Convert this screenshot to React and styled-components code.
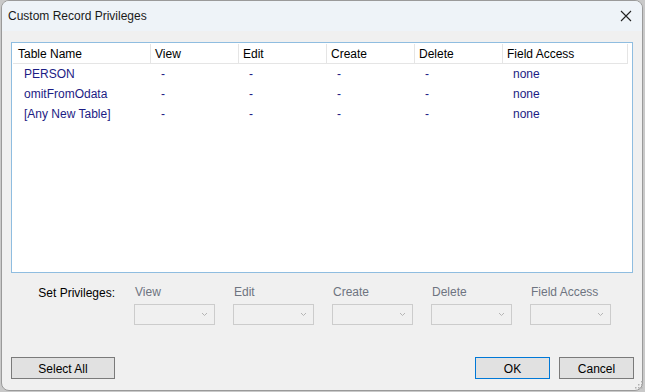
import React from 'react'
import styled, { createGlobalStyle } from 'styled-components'

const GlobalStyle = createGlobalStyle`
  html, body {
    margin: 0;
    padding: 0;
    background: #c9c9c9;
    font-family: "Liberation Sans", Arial, sans-serif;
    font-size: 12px;
  }
`

const Frame = styled.div`
  position: relative;
`

const Window = styled.div`
  margin-left: 1px;
  width: 642px;
  height: 391px;
  box-sizing: border-box;
  border: 1px solid #9a9a9a;
  border-radius: 8px;
  background: #f0f0f0;
  overflow: hidden;
  display: flex;
  flex-direction: column;
`

const TitleBar = styled.div`
  height: 30px;
  flex: 0 0 auto;
  background: #eef3f8;
  display: flex;
  align-items: center;
  justify-content: space-between;
  padding: 0 10px 0 6px;
  color: #1a1a1a;
`

const CloseButton = styled.svg`
  width: 12px;
  height: 12px;
`

const Body = styled.div`
  flex: 1 1 auto;
  padding: 11px 8px 11px 9px;
  display: flex;
  flex-direction: column;
`

const ListBox = styled.div`
  height: 231px;
  box-sizing: border-box;
  border: 1px solid #8fbde0;
  background: #fff;
  padding: 1px;
  margin-right: 1px;
`

const Grid = styled.div`
  display: grid;
  grid-template-columns: 138px 88px 88px 88px 88px 125px;
`

const HeadCell = styled.div`
  height: 18px;
  padding-top: 1px;
  line-height: 19px;
  padding-left: ${p => (p.first ? '5px' : '4px')};
  border-right: 1px solid #e5e5e5;
  border-bottom: 1px solid #e5e5e5;
  color: #000;
  white-space: nowrap;
`

const Cell = styled.div`
  height: 20px;
  line-height: 20px;
  padding-left: ${p => (p.first ? '11px' : '10px')};
  color: #1c1c84;
  white-space: nowrap;
`

const Privileges = styled.div`
  display: flex;
  margin-top: 11px;
`

const PrivLabel = styled.div`
  width: 104px;
  text-align: right;
  padding-top: 2px;
  color: #000;
`

const Fields = styled.div`
  display: flex;
  gap: 18px;
  margin-left: 19px;
`

const Field = styled.div`
  display: flex;
  flex-direction: column;
  gap: 4px;
`

const FieldLabel = styled.div`
  color: #6e7480;
  padding-left: 1px;
  height: 16px;
  line-height: 16px;
`

const Select = styled.div`
  width: 81px;
  height: 21px;
  box-sizing: border-box;
  border: 1px solid #cccccc;
  display: flex;
  justify-content: flex-end;
  align-items: center;
  padding-right: 6px;
`

const Footer = styled.div`
  margin-top: auto;
  display: flex;
  justify-content: space-between;
  align-items: flex-end;
`

const Buttons = styled.div`
  display: flex;
  gap: 9px;
`

const Button = styled.button`
  width: ${p => p.width || 75}px;
  height: 22px;
  box-sizing: border-box;
  background: #e1e1e1;
  border: 1px solid ${p => (p.primary ? '#0078d7' : '#7a7a7a')};
  font-family: inherit;
  font-size: 12px;
  color: #000;
  padding: 1px 0 0;
`

const Grip = styled.svg`
  position: absolute;
  right: 2px;
  bottom: 2px;
`

const columns = ['Table Name', 'View', 'Edit', 'Create', 'Delete', 'Field Access']
const rows = ['PERSON', 'omitFromOdata', '[Any New Table]']
const fields = ['View', 'Edit', 'Create', 'Delete', 'Field Access']

const Chevron = () => (
  <svg width="7" height="5" viewBox="0 0 7 5">
    <path d="M1 1 L3.5 3.5 L6 1" fill="none" stroke="#b5b5b5" strokeWidth="1" />
  </svg>
)

export default function App() {
  return (
    <>
      <GlobalStyle />
      <Frame>
        <Window>
          <TitleBar>
            <span>Custom Record Privileges</span>
            <CloseButton viewBox="0 0 12 12">
              <path d="M1 1 L11 11 M11 1 L1 11" stroke="#222" strokeWidth="1.1" />
            </CloseButton>
          </TitleBar>
          <Body>
            <ListBox>
              <Grid>
                {columns.map((c, i) => (
                  <HeadCell key={c} first={i === 0}>{c}</HeadCell>
                ))}
                {rows.map(r => (
                  <React.Fragment key={r}>
                    <Cell first>{r}</Cell>
                    <Cell>-</Cell>
                    <Cell>-</Cell>
                    <Cell>-</Cell>
                    <Cell>-</Cell>
                    <Cell>none</Cell>
                  </React.Fragment>
                ))}
              </Grid>
            </ListBox>
            <Privileges>
              <PrivLabel>Set Privileges:</PrivLabel>
              <Fields>
                {fields.map(f => (
                  <Field key={f}>
                    <FieldLabel>{f}</FieldLabel>
                    <Select>
                      <Chevron />
                    </Select>
                  </Field>
                ))}
              </Fields>
            </Privileges>
            <Footer>
              <Button width={104}>Select All</Button>
              <Buttons>
                <Button primary>OK</Button>
                <Button>Cancel</Button>
              </Buttons>
            </Footer>
          </Body>
        </Window>
        <Grip width="8" height="8" viewBox="0 0 8 8">
          {[[6, 0], [6, 3], [3, 3], [6, 6], [3, 6], [0, 6]].map(([x, y]) => (
            <rect key={`${x}-${y}`} x={x} y={y} width="1.5" height="1.5" fill="#b0b0b0" />
          ))}
        </Grip>
      </Frame>
    </>
  )
}
